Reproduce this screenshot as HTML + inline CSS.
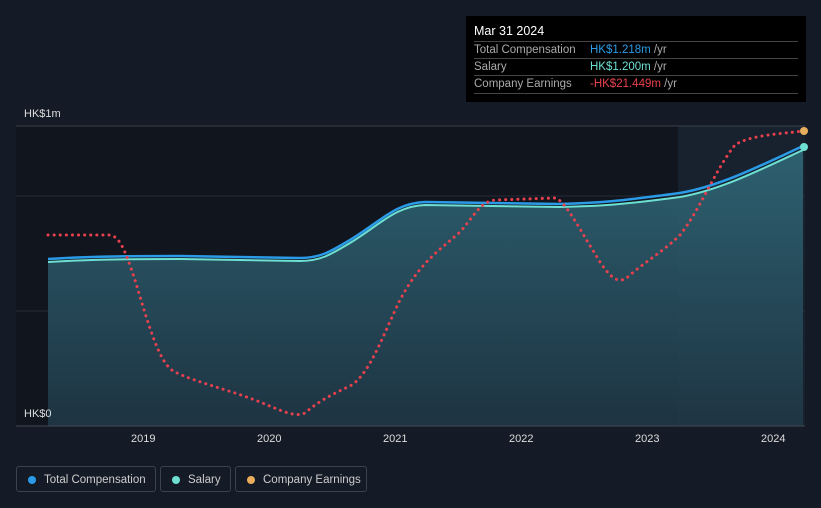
<!DOCTYPE html>
<html><head><style>
body{margin:0;width:821px;height:508px;background:#151b26;font-family:"Liberation Sans",sans-serif;overflow:hidden;position:relative}
.tip{position:absolute;left:466px;top:16px;width:340px;height:86px;background:#000;color:#fff;font-size:11.5px}
.tip .t{position:absolute;left:8px;top:8px;font-size:12.5px}
.row{position:absolute;left:8px;width:324px;border-top:1px solid #444;height:17px;line-height:17px;color:#aaa}
.row span{position:absolute;left:116px}
.leg{position:absolute;top:466px;height:26px;border:1px solid #3c424c;border-radius:3px;color:#ccc;font-size:11.5px;line-height:26px;box-sizing:border-box}
.leg i{position:absolute;left:11px;top:9px;width:8px;height:8px;border-radius:50%}
.leg b{font-weight:normal;position:absolute;left:27px}
.ax{position:absolute;color:#ddd;font-size:11px}
</style></head><body>
<svg width="821" height="508" style="position:absolute;left:0;top:0">
<defs><linearGradient id="g" x1="0" y1="0" x2="0" y2="1"><stop offset="0" stop-color="#2f6676"/><stop offset="1" stop-color="#1f3645"/></linearGradient></defs>
<rect x="16" y="126" width="789" height="300" fill="#10151e"/>
<rect x="678" y="126" width="127" height="300" fill="#17222e"/>
<line x1="16" y1="126" x2="805" y2="126" stroke="#3a404a"/>
<line x1="16" y1="196" x2="805" y2="196" stroke="#262c36"/>
<line x1="16" y1="311" x2="805" y2="311" stroke="#262c36"/>
<path d="M48 262 C80 260 110 259 180 259 L300 261 C320 261 330 255 350 243 C380 225 395 206 425 205 L560 207 C600 206 620 205 680 197 C720 190 760 170 803 150 L803 426 L48 426 Z" fill="url(#g)" opacity="0.92"/>
<path d="M48 262 C80 260 110 259 180 259 L300 261 C320 261 330 255 350 243 C380 225 395 206 425 205 L560 207 C600 206 620 205 680 197 C720 190 760 170 803 150" fill="none" stroke="#6ee0d2" stroke-width="2"/>
<path d="M48 259 C80 257 110 256 180 256 L300 258 C320 258 330 252 350 240 C380 222 395 203 425 202 L560 204 C600 203 620 201 680 193 C720 186 760 166 803 146" fill="none" stroke="#2b9be8" stroke-width="2.5"/>
<path d="M48 235 L110 235 C120 237 125 250 135 280 C150 330 160 365 175 372 C195 382 230 390 260 402 C280 410 295 418 305 413 C320 400 335 393 350 386 C370 375 385 330 400 300 C420 262 440 250 460 232 C475 215 480 202 495 200 L555 198 C565 200 580 230 600 262 C612 280 620 285 630 275 C645 262 665 250 680 235 C700 210 715 170 735 145 C750 135 780 134 803 131" fill="none" stroke="#e8414d" stroke-width="3" stroke-dasharray="0.1 6" stroke-linecap="round"/>
<line x1="16" y1="426" x2="805" y2="426" stroke="#444a54"/>
<circle cx="804" cy="131" r="4" fill="#e9ad5e"/>
<circle cx="804" cy="147" r="4" fill="#6ee0d2"/>
</svg>
<div class="ax" style="left:24px;top:108px">HK$1m</div>
<div class="ax" style="left:24px;top:408px">HK$0</div>
<div class="ax" style="left:131px;top:433px">2019</div>
<div class="ax" style="left:257px;top:433px">2020</div>
<div class="ax" style="left:383px;top:433px">2021</div>
<div class="ax" style="left:509px;top:433px">2022</div>
<div class="ax" style="left:635px;top:433px">2023</div>
<div class="ax" style="left:761px;top:433px">2024</div>
<div class="tip"><div class="t">Mar 31 2024</div>
<div class="row" style="top:25px">Total Compensation<span><font color="#2b9be8">HK$1.218m</font> /yr</span></div>
<div class="row" style="top:42px">Salary<span><font color="#6ee0d2">HK$1.200m</font> /yr</span></div>
<div class="row" style="top:59px;border-bottom:1px solid #444">Company Earnings<span><font color="#e8414d">-HK$21.449m</font> /yr</span></div>
</div>
<div class="leg" style="left:16px;width:140px"><i style="background:#2b9be8"></i><b>Total Compensation</b></div>
<div class="leg" style="left:160px;width:71px"><i style="background:#6ee0d2"></i><b>Salary</b></div>
<div class="leg" style="left:235px;width:132px"><i style="background:#e9ad5e"></i><b>Company Earnings</b></div>
</body></html>
